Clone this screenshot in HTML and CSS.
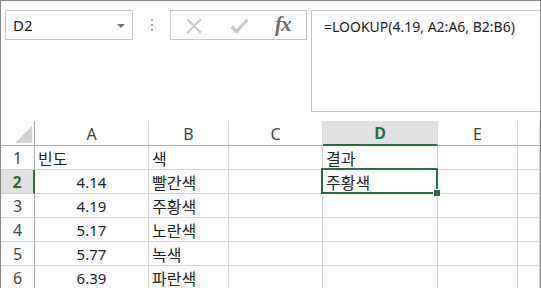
FILE: index.html
```html
<!DOCTYPE html>
<html lang="ko">
<head>
<meta charset="utf-8">
<link rel="stylesheet" href="styles.css">
</head>
<body>
<div class="frame">
  <div class="toolbar">
    <div class="namebox">
      <span class="name">D2</span>
      <span class="caret"></span>
    </div>
    <div class="grip"><i></i><i></i><i></i></div>
    <div class="buttons">
      <svg class="icon-x" width="16" height="16" viewBox="0 0 16 16"><path d="M1 1L15 15M15 1L1 15" stroke="#c9c9c9" stroke-width="2" fill="none"/></svg>
      <svg class="icon-check" width="19" height="16" viewBox="0 0 19 16"><path d="M1.5 8.5L6.5 13.5L17.5 1.5" stroke="#c9c9c9" stroke-width="3.2" fill="none"/></svg>
      <span class="fx">fx</span>
    </div>
    <div class="formula">=LOOKUP(4.19, A2:A6, B2:B6)</div>
  </div>
  <div class="sheet">
    <div class="corner"><span class="tri"></span></div>
    <div class="colhead">A</div>
    <div class="colhead">B</div>
    <div class="colhead">C</div>
    <div class="colhead sel">D</div>
    <div class="colhead">E</div>
    <div class="colhead"></div>

    <div class="rowhead">1</div>
    <div class="cell ko">빈도</div>
    <div class="cell ko">색</div>
    <div class="cell"></div>
    <div class="cell ko">결과</div>
    <div class="cell"></div>
    <div class="cell"></div>

    <div class="rowhead sel">2</div>
    <div class="cell num">4.14</div>
    <div class="cell ko">빨간색</div>
    <div class="cell"></div>
    <div class="cell ko active">주황색</div>
    <div class="cell"></div>
    <div class="cell"></div>

    <div class="rowhead">3</div>
    <div class="cell num">4.19</div>
    <div class="cell ko">주황색</div>
    <div class="cell"></div>
    <div class="cell"></div>
    <div class="cell"></div>
    <div class="cell"></div>

    <div class="rowhead">4</div>
    <div class="cell num">5.17</div>
    <div class="cell ko">노란색</div>
    <div class="cell"></div>
    <div class="cell"></div>
    <div class="cell"></div>
    <div class="cell"></div>

    <div class="rowhead">5</div>
    <div class="cell num">5.77</div>
    <div class="cell ko">녹색</div>
    <div class="cell"></div>
    <div class="cell"></div>
    <div class="cell"></div>
    <div class="cell"></div>

    <div class="rowhead">6</div>
    <div class="cell num">6.39</div>
    <div class="cell ko">파란색</div>
    <div class="cell"></div>
    <div class="cell"></div>
    <div class="cell"></div>
    <div class="cell"></div>
  </div>
</div>
</body>
</html>
```

FILE: styles.css
```css
* { box-sizing: border-box; }
html, body { margin: 0; padding: 0; background: #fff; }
body {
  font-family: "Noto Sans", "Noto Sans CJK KR", sans-serif;
  color: #222;
}
.frame {
  width: 541px;
  height: 288px;
  overflow: hidden;
  border: 1px solid #868686;
  border-bottom: none;
  background: #fff;
}
.toolbar {
  display: flex;
  align-items: flex-start;
  padding: 9px 0 0 4px;
  height: 111px;
}
.namebox {
  width: 128px;
  height: 30px;
  border: 1px solid #c6c6c6;
  display: flex;
  align-items: center;
  justify-content: space-between;
  padding: 0 7px 0 7px;
}
.name {
  font-size: 15px;
  color: #222;
  line-height: 1;
}
.caret {
  width: 0;
  height: 0;
  border-left: 4px solid transparent;
  border-right: 4px solid transparent;
  border-top: 4px solid #6f6f6f;
  margin-top: 1px;
}
.grip {
  width: 37px;
  height: 30px;
  display: flex;
  flex-direction: column;
  align-items: center;
  justify-content: center;
  gap: 3px;
}
.grip i {
  display: block;
  width: 2px;
  height: 2px;
  background: #aaa;
}
.buttons {
  width: 137px;
  height: 30px;
  border: 1px solid #c6c6c6;
  display: flex;
  align-items: center;
  padding-left: 15px;
}
.icon-x { margin-top: 1px; }
.icon-check { margin-left: 28px; margin-top: 1px; }
.fx {
  margin-left: 26px;
  font-family: "Liberation Serif", "DejaVu Serif", serif;
  font-style: italic;
  font-weight: bold;
  font-size: 21px;
  color: #6a6a6a;
  line-height: 1;
  letter-spacing: -1px;
  margin-top: -2px;
}
.formula {
  flex: 1;
  margin-left: 4px;
  height: 102px;
  border: 1px solid #c6c6c6;
  border-right: none;
  padding: 7px 0 0 12px;
  font-size: 14px;
  line-height: 18px;
  color: #222;
}
.sheet {
  margin-top: 9px;
  display: grid;
  grid-template-columns: 34px 114px 80px 94px 115px 80px 1fr;
  grid-template-rows: 25px repeat(6, 24px);
}
.corner {
  border-right: 1px solid #ababab;
  border-bottom: 1px solid #ababab;
  display: flex;
  align-items: flex-end;
  justify-content: flex-end;
  padding: 0 2px 2px 0;
}
.tri {
  width: 17px;
  height: 17px;
  background: #d2d2d2;
  clip-path: polygon(100% 0, 100% 100%, 0 100%);
}
.colhead {
  border-bottom: 1px solid #ababab;
  border-right: 1px solid #dcdcdc;
  display: flex;
  align-items: center;
  justify-content: center;
  font-size: 16px;
  color: #444;
  padding-top: 1px;
}
.colhead.sel {
  background: #e1e1e1;
  border-bottom: 2px solid #217346;
  color: #217346;
  font-weight: bold;
}
.rowhead {
  border-right: 1px solid #ababab;
  border-bottom: 1px solid #d4d4d4;
  display: flex;
  align-items: center;
  justify-content: center;
  font-size: 16px;
  color: #444;
}
.rowhead.sel {
  background: #e1e1e1;
  border-right: 2px solid #217346;
  color: #217346;
  font-weight: bold;
}
.cell {
  border-right: 1px solid #d4d4d4;
  border-bottom: 1px solid #d4d4d4;
  display: flex;
  align-items: center;
  padding: 0 3px;
  font-size: 15px;
  color: #222;
  white-space: nowrap;
}
.cell.ko { font-size: 16px; }
.cell.num { justify-content: center; }
.cell.active { position: relative; }
.cell.active::after {
  content: "";
  position: absolute;
  left: -2px;
  top: -2px;
  right: -1px;
  bottom: -1px;
  border: 2px solid #217346;
}
.cell.active::before {
  content: "";
  position: absolute;
  right: -4px;
  bottom: -4px;
  width: 6px;
  height: 6px;
  background: #217346;
  border: 1px solid #fff;
  z-index: 2;
}
```
